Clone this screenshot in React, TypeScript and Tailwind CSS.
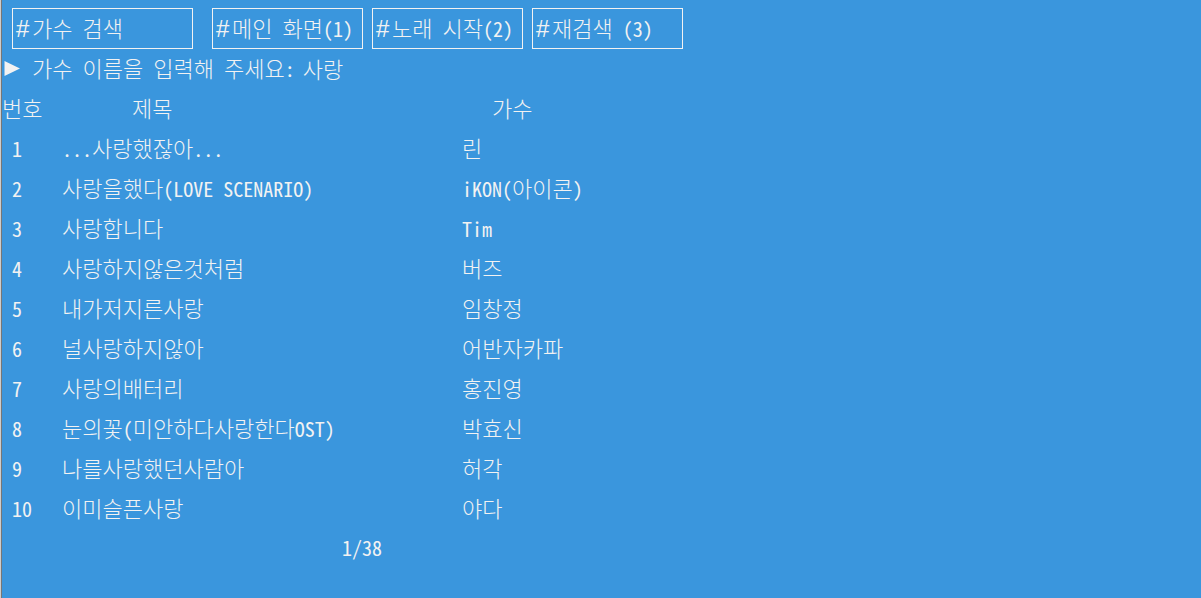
import type { ReactNode } from "react";

const songs = [
  { title: "...사랑했잖아...", artist: "린" },
  { title: "사랑을했다(LOVE SCENARIO)", artist: "iKON(아이콘)" },
  { title: "사랑합니다", artist: "Tim" },
  { title: "사랑하지않은것처럼", artist: "버즈" },
  { title: "내가저지른사랑", artist: "임창정" },
  { title: "널사랑하지않아", artist: "어반자카파" },
  { title: "사랑의배터리", artist: "홍진영" },
  { title: "눈의꽃(미안하다사랑한다OST)", artist: "박효신" },
  { title: "나를사랑했던사람아", artist: "허각" },
  { title: "이미슬픈사랑", artist: "야다" },
];

function Cells({ text }: { text: string }) {
  return (
    <span className="whitespace-pre">
      {text.split(/([가-힣]+)/).map((run, i) =>
        i % 2 === 1 ? (
          <span
            key={i}
            className="font-['Noto_Sans_CJK_KR',sans-serif] text-[22px] leading-none font-light"
          >
            {run}
          </span>
        ) : (
          run
        ),
      )}
    </span>
  );
}

function Hash() {
  return (
    <span className="w-4 shrink-0 text-left font-['Liberation_Sans',sans-serif] text-2xl">#</span>
  );
}

function MenuButton({ children }: { children: ReactNode }) {
  return (
    <button type="button" className="flex w-[151px] items-center border border-[#f2f2f2] pl-[3px]">
      {children}
    </button>
  );
}

export default function App() {
  return (
    <main className="min-h-screen border-l border-[#cccccc] bg-[#3a96dd] font-['Noto_Sans_Mono_CJK_KR','Noto_Sans_CJK_KR',monospace] text-[20px] leading-[38px] font-thin text-[#f2f2f2]">
      <div className="min-h-screen border-l border-[#767676] pt-2">
        <header className="flex h-[41px] pl-[10px]">
          <h1 className="mr-[19px] flex w-[181px] items-center border border-[#f2f2f2] pl-[3px]">
            <Hash />
            <Cells text="가수 검색" />
          </h1>
          <nav className="flex gap-[9px]">
            <MenuButton><Hash /><Cells text="메인 화면(1)" /></MenuButton>
            <MenuButton><Hash /><Cells text="노래 시작(2)" /></MenuButton>
            <MenuButton><Hash /><Cells text="재검색 (3)" /></MenuButton>
          </nav>
        </header>

        <form className="flex h-10 items-center">
          <svg className="mr-[10px] h-5 w-5" viewBox="0 0 20 20" aria-hidden="true">
            <path d="M2.5 2 18 9.5 2.5 17Z" fill="currentColor" />
          </svg>
          <label htmlFor="artist" className="mr-2">
            <Cells text="가수 이름을 입력해 주세요:" />
          </label>
          <input
            id="artist"
            type="text"
            defaultValue="사랑"
            className="h-9 min-w-0 flex-1 bg-transparent pb-[2px] font-['Noto_Sans_CJK_KR',sans-serif] text-[22px] font-light outline-none"
          />
        </form>

        <table className="w-full table-fixed border-collapse text-left">
          <thead>
            <tr className="h-10">
              <th className="w-[60px] p-0 font-thin"><Cells text="번호" /></th>
              <th className="w-[400px] p-0 pl-[70px] font-thin"><Cells text="제목" /></th>
              <th className="p-0 pl-[30px] font-thin"><Cells text="가수" /></th>
            </tr>
          </thead>
          <tbody>
            {songs.map((song, index) => (
              <tr key={song.title} className="h-10">
                <td className="p-0 pl-[10px]">{index + 1}</td>
                <td className="p-0"><Cells text={song.title} /></td>
                <td className="p-0"><Cells text={song.artist} /></td>
              </tr>
            ))}
          </tbody>
        </table>
        <p className="pl-[340px]">1/38</p>
      </div>
    </main>
  );
}
